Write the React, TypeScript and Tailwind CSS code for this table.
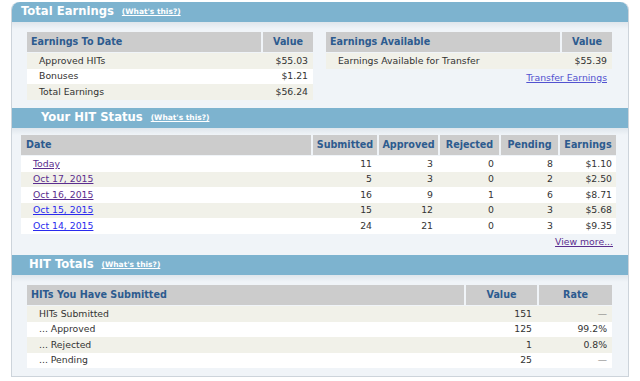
import React from "react";

const HEAD_BG = "bg-[#7db3cf]";

function SectionHeader({ title, pl, rounded }: { title: string; pl: string; rounded?: boolean }) {
  return (
    <div className={`h-[20px] ${HEAD_BG} flex items-center ${pl} ${rounded ? "rounded-t-[8px]" : ""}`}>
      <span className="text-white font-bold text-[11.6px] leading-none">{title}</span>
      <span className="ml-[8px] text-white font-bold text-[7.5px] leading-none underline">(What's this?)</span>
    </div>
  );
}

const TH = "h-[20px] bg-[#cccccc] text-[#2d5b8f] font-bold text-[9.6px] flex items-center";
const TD = "h-[15.5px] text-[#333333] text-[9.3px] flex items-center";

function App() {
  const hitRows = [
    { d: "Today", v: true, s: 11, a: 3, r: 0, p: 8, e: "$1.10" },
    { d: "Oct 17, 2015", v: true, s: 5, a: 3, r: 0, p: 2, e: "$2.50" },
    { d: "Oct 16, 2015", v: true, s: 16, a: 9, r: 1, p: 6, e: "$8.71" },
    { d: "Oct 15, 2015", v: false, s: 15, a: 12, r: 0, p: 3, e: "$5.68" },
    { d: "Oct 14, 2015", v: false, s: 24, a: 21, r: 0, p: 3, e: "$9.35" },
  ];
  const totals = [
    { l: "HITs Submitted", v: "151", r: "—" },
    { l: "... Approved", v: "125", r: "99.2%" },
    { l: "... Rejected", v: "1", r: "0.8%" },
    { l: "... Pending", v: "25", r: "—" },
  ];
  const earn = [
    { l: "Approved HITs", v: "$55.03" },
    { l: "Bonuses", v: "$1.21" },
    { l: "Total Earnings", v: "$56.24" },
  ];
  return (
    <div className="w-[640px] h-[381px] bg-white pt-[2px] pl-[11px] font-['DejaVu_Sans',sans-serif]">
      <div className="w-[618px] border border-[#cdd4db] border-t-0 rounded-t-[8px] bg-[#f0f4f8]">
        <SectionHeader title="Total Earnings" pl="pl-[9px]" rounded />
        <div className="h-[86px] pt-[10px] pl-[15px] flex gap-[13px] bg-[linear-gradient(to_bottom,#dfe6ec,#f0f4f8_7px)]">
          <div className="w-[286px]">
            <div className="flex gap-[2px]">
              <div className={`${TH} w-[234px] pl-[4px]`}>Earnings To Date</div>
              <div className={`${TH} w-[50px] justify-center`}>Value</div>
            </div>
            <div className="mt-[1px]">
              {earn.map((r, i) => (
                <div key={i} className={`flex gap-[2px] ${i % 2 === 0 ? "bg-[#f1f1e9]" : "bg-white"}`}>
                  <div className={`${TD} w-[234px] pl-[12px]`}>{r.l}</div>
                  <div className={`${TD} w-[50px] justify-end pr-[5px]`}>{r.v}</div>
                </div>
              ))}
            </div>
          </div>
          <div className="w-[286px]">
            <div className="flex gap-[2px]">
              <div className={`${TH} w-[234px] pl-[4px]`}>Earnings Available</div>
              <div className={`${TH} w-[50px] justify-center`}>Value</div>
            </div>
            <div className="mt-[1px] flex gap-[2px] bg-[#f1f1e9]">
              <div className={`${TD} w-[234px] pl-[12px]`}>Earnings Available for Transfer</div>
              <div className={`${TD} w-[50px] justify-end pr-[5px]`}>$55.39</div>
            </div>
            <div className="mt-[3.5px] text-right pr-[5px] leading-[12px] text-[9.3px]">
              <a className="text-[#5252d0] underline">Transfer Earnings</a>
            </div>
          </div>
        </div>

        <SectionHeader title="Your HIT Status" pl="pl-[29px]" />
        <div className="h-[127px] pt-[7px] pl-[9px] bg-[linear-gradient(to_bottom,#dfe6ec,#f0f4f8_7px)]">
          <div className="w-[595px]">
            <div className="flex gap-[2px]">
              <div className={`${TH} w-[290px] pl-[5px]`}>Date</div>
              <div className={`${TH} w-[64px] justify-center`}>Submitted</div>
              <div className={`${TH} w-[59px] justify-center`}>Approved</div>
              <div className={`${TH} w-[59px] justify-center`}>Rejected</div>
              <div className={`${TH} w-[57px] justify-center`}>Pending</div>
              <div className={`${TH} w-[56px] justify-center`}>Earnings</div>
            </div>
            <div className="mt-[1px]">
              {hitRows.map((r, i) => (
                <div key={i} className={`flex gap-[2px] ${i % 2 === 1 ? "bg-[#f1f1e9]" : "bg-white"}`}>
                  <div className={`${TD} w-[290px] pl-[12px]`}>
                    <a className={`underline ${r.v ? "text-[#5b2d8e]" : "text-[#2b2bee]"}`}>{r.d}</a>
                  </div>
                  <div className={`${TD} w-[64px] justify-end pr-[5px]`}>{r.s}</div>
                  <div className={`${TD} w-[59px] justify-end pr-[5px]`}>{r.a}</div>
                  <div className={`${TD} w-[59px] justify-end pr-[5px]`}>{r.r}</div>
                  <div className={`${TD} w-[57px] justify-end pr-[5px]`}>{r.p}</div>
                  <div className={`${TD} w-[56px] justify-end pr-[4px]`}>{r.e}</div>
                </div>
              ))}
            </div>
            <div className="mt-[2.5px] text-right pr-[3px] leading-[12px] text-[9.3px]">
              <a className="text-[#5b2d8e] underline">View more...</a>
            </div>
          </div>
        </div>

        <SectionHeader title="HIT Totals" pl="pl-[17px]" />
        <div className="h-[101px] pt-[10px] pl-[15px] bg-[linear-gradient(to_bottom,#dfe6ec,#f0f4f8_7px)]">
          <div className="w-[585px]">
            <div className="flex gap-[2px]">
              <div className={`${TH} w-[437px] pl-[4px]`}>HITs You Have Submitted</div>
              <div className={`${TH} w-[71px] justify-center`}>Value</div>
              <div className={`${TH} w-[73px] justify-center`}>Rate</div>
            </div>
            <div className="mt-[1px]">
              {totals.map((r, i) => (
                <div key={i} className={`flex gap-[2px] ${i % 2 === 0 ? "bg-[#f1f1e9]" : "bg-white"}`}>
                  <div className={`${TD} w-[437px] pl-[12px]`}>{r.l}</div>
                  <div className={`${TD} w-[71px] justify-end pr-[5px]`}>{r.v}</div>
                  <div className={`${TD} w-[73px] justify-end pr-[5px] ${r.r === "—" ? "text-[#777777]" : ""}`}>{r.r}</div>
                </div>
              ))}
            </div>
          </div>
        </div>
      </div>
    </div>
  );
}

export default App;
